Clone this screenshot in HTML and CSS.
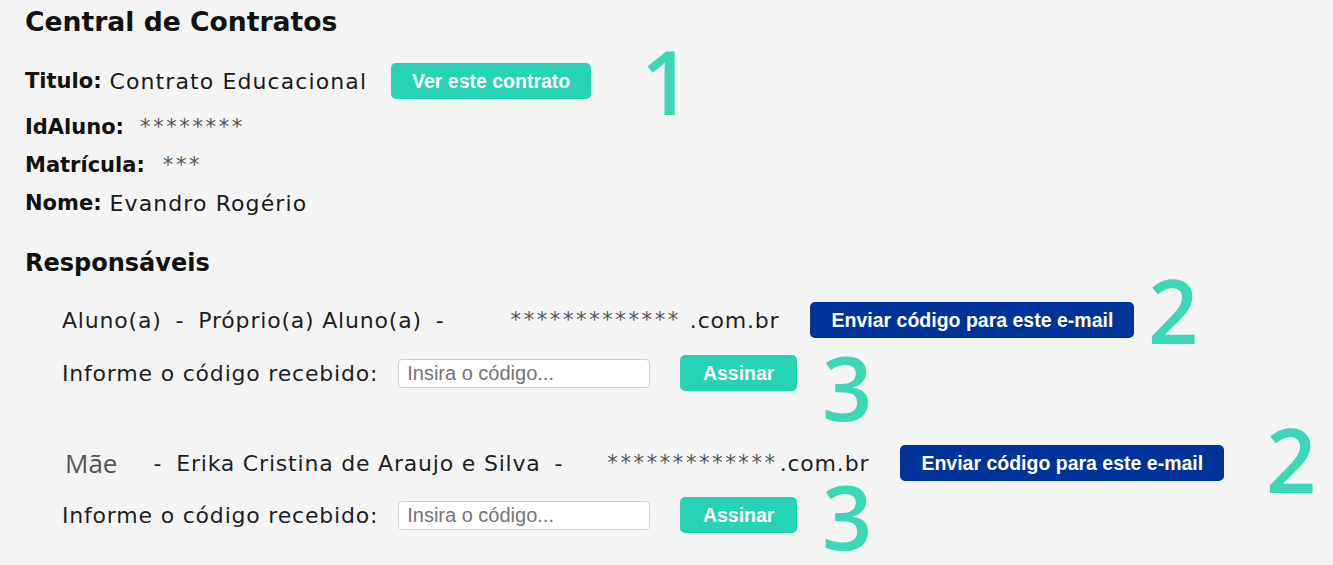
FILE: index.html
```html
<!DOCTYPE html>
<html>
<head>
    <title>Central de Contratos</title>
    <link rel="stylesheet" href="styles.css">
</head>
<body>
    <main class="page">
        <h1 class="title">Central de Contratos</h1>

        <div class="field field-title">
            <span class="label">Titulo:</span>
            <span class="value">Contrato Educacional</span>
            <button type="button" class="btn btn-teal btn-view">Ver este contrato</button>
            <span class="mark mark-1">1</span>
        </div>
        <div class="field">
            <span class="label">IdAluno:</span>
            <span class="masked masked-id">********</span>
        </div>
        <div class="field">
            <span class="label">Matrícula:</span>
            <span class="masked masked-mat">***</span>
        </div>
        <div class="field">
            <span class="label">Nome:</span>
            <span class="value">Evandro Rogério</span>
        </div>

        <h2 class="subtitle">Responsáveis</h2>

        <div class="resp resp-first">
            <div class="resp-line">
                <span class="who">Aluno(a)</span>
                <span class="sep">-</span>
                <span class="who">Próprio(a) Aluno(a)</span>
                <span class="sep">-</span>
                <span class="masked masked-mail">*************</span>
                <span class="domain">.com.br</span>
                <button type="button" class="btn btn-blue">Enviar código para este e-mail</button>
                <span class="mark mark-2">2</span>
            </div>
            <div class="code-line">
                <span class="code-label">Informe o código recebido:</span>
                <input type="text" class="code-input" placeholder="Insira o código...">
                <button type="button" class="btn btn-teal btn-sign">Assinar</button>
                <span class="mark mark-3">3</span>
            </div>
        </div>

        <div class="resp resp-second">
            <div class="resp-line">
                <span class="kin">Mãe</span>
                <span class="sep">-</span>
                <span class="who">Erika Cristina de Araujo e Silva</span>
                <span class="sep">-</span>
                <span class="masked masked-mail">*************</span>
                <span class="domain domain-tight">.com.br</span>
                <button type="button" class="btn btn-blue">Enviar código para este e-mail</button>
                <span class="mark mark-2b">2</span>
            </div>
            <div class="code-line">
                <span class="code-label">Informe o código recebido:</span>
                <input type="text" class="code-input" placeholder="Insira o código...">
                <button type="button" class="btn btn-teal btn-sign">Assinar</button>
                <span class="mark mark-3b">3</span>
            </div>
        </div>
    </main>
</body>
</html>
```

FILE: styles.css
```css
body {
    margin: 0;
    background-color: #f4f4f4;
    font-family: "DejaVu Sans", "Open Sans", sans-serif;
    color: #111;
}

.page {
    padding-left: 25px;
    height: 565px;
    overflow: hidden;
}

.title {
    margin: 0;
    height: 44px;
    line-height: 44px;
    font-size: 26.6px;
    font-weight: bold;
}

.field {
    display: flex;
    align-items: center;
    height: 38px;
    font-size: 21px;
}

.field-title {
    position: relative;
    margin-top: 18px;
    margin-bottom: 8px;
}

.label {
    font-weight: bold;
    margin-right: 8px;
}

.value {
    color: #1a1a1a;
    font-size: 22px;
    letter-spacing: 1.1px;
}

.masked {
    color: #555;
    font-size: 21px;
    letter-spacing: 2.6px;
}

.masked-id {
    margin-left: 8px;
}

.masked-mat {
    margin-left: 10px;
}

/* buttons */
.btn {
    border: none;
    border-radius: 5px;
    color: #fff;
    font-family: "Liberation Sans", Arial, sans-serif;
    font-weight: bold;
    font-size: 19.5px;
    letter-spacing: 0;
    height: 36px;
    padding: 0;
    cursor: pointer;
}

.btn-teal {
    background-color: #26d3b3;
}

.btn-blue {
    background-color: #003399;
}

.btn-view {
    width: 200px;
    margin-left: 24px;
}

.btn-sign {
    width: 117px;
    margin-left: 30px;
}

.subtitle {
    margin: 22px 0 0 0;
    height: 38px;
    line-height: 38px;
    font-size: 24px;
    font-weight: bold;
}

/* responsaveis */
.resp {
    padding-left: 37px;
    font-size: 22px;
    letter-spacing: 0.8px;
    color: #1f1f1f;
}

.resp-first {
    margin-top: 18px;
}

.resp-second {
    margin-top: 51px;
}

.resp-line {
    position: relative;
    display: flex;
    align-items: center;
    height: 40px;
    white-space: pre;
}

.sep {
    margin: 0 14px;
}

.kin {
    font-family: "Open Sans", sans-serif;
    color: #555;
    font-size: 26px;
    letter-spacing: 0;
    margin-left: 3px;
    margin-right: 22px;
}

.masked-mail {
    margin-left: 52px;
}

.resp-second .masked-mail {
    margin-left: 30px;
}

.domain {
    margin-left: 9px;
}

.domain-tight {
    margin-left: 2px;
}

.btn-blue {
    margin-left: 31px;
    width: 324px;
}

.code-line {
    position: relative;
    display: flex;
    align-items: center;
    height: 38px;
    margin-top: 14px;
}

.resp-second .code-line {
    margin-top: 13px;
}

.code-input {
    margin-left: 20px;
    width: 252px;
    height: 29px;
    box-sizing: border-box;
    border: 1px solid #cfcfcf;
    border-radius: 4px;
    background: #fff;
    padding: 0 8px;
    font-family: "Liberation Sans", Arial, sans-serif;
    font-size: 20px;
}

.code-input::placeholder {
    color: #757575;
}

/* annotation numbers laid over the form */
.mark {
    position: absolute;
    font-family: "Open Sans", sans-serif;
    font-weight: 600;
    font-size: 88px;
    line-height: 64px;
    letter-spacing: 0;
    color: #3dd6b7;
}

.mark-1 {
    left: 616px;
    top: -13px;
}

.mark-2 {
    left: 1086px;
    top: -22px;
}

.mark-2b {
    left: 1204px;
    top: -16px;
}

.mark-3 {
    left: 760px;
    top: 1px;
}

.mark-3b {
    left: 760px;
    top: -12px;
}
```
